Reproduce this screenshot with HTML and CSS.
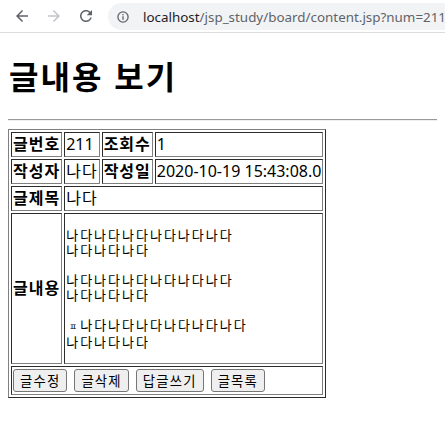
FILE: index.html
```html
<!DOCTYPE html>
<html lang="ko">
<head>
<meta charset="utf-8">
<title>글내용 보기</title>
<link rel="stylesheet" href="styles.css">
</head>
<body>
<div class="toolbar">
  <span class="nav back">
    <svg viewBox="0 0 24 24" width="18" height="18"><path d="M20 11H7.83l5.59-5.59L12 4l-8 8 8 8 1.41-1.41L7.83 13H20v-2z"/></svg>
  </span>
  <span class="nav fwd">
    <svg viewBox="0 0 24 24" width="18" height="18"><path d="M4 11h12.17l-5.59-5.59L12 4l8 8-8 8-1.41-1.41L16.17 13H4v-2z"/></svg>
  </span>
  <span class="nav reload">
    <svg viewBox="0 0 24 24" width="18" height="18"><path d="M17.65 6.35C16.2 4.9 14.21 4 12 4c-4.42 0-7.99 3.58-7.990 8s3.57 8 7.99 8c3.73 0 6.84-2.55 7.73-6h-2.08c-.82 2.33-3.04 4-5.65 4-3.31 0-6-2.69-6-6s2.69-6 6-6c1.66 0 3.14.69 4.22 1.78L13 11h7V4l-2.35 2.35z"/></svg>
  </span>
  <div class="omnibox">
    <svg class="info" viewBox="0 0 12 12" width="12" height="12"><circle cx="6" cy="6" r="5.1" fill="none" stroke="#5f6368" stroke-width="1.3"/><rect x="5.35" y="5.2" width="1.3" height="3.6" fill="#5f6368"/><rect x="5.35" y="3" width="1.3" height="1.3" fill="#5f6368"/></svg>
    <span class="url"><span class="host">localhost</span>/jsp_study/board/content.jsp?num=211</span>
  </div>
</div>
<div class="page">
  <h1>글내용 보기</h1>
  <hr class="rule">
  <table class="board">
    <tr><th>글번호</th><td>211</td><th>조회수</th><td>1</td></tr>
    <tr><th>작성자</th><td class="ko">나다</td><th>작성일</th><td>2020-10-19 15:43:08.0</td></tr>
    <tr><th>글제목</th><td colspan="3" class="ko">나다</td></tr>
    <tr><th>글내용</th><td colspan="3"><pre class="content">나다나다나다나다나다나다
나다나다나다

나다나다나다나다나다나다
나다나다나다

<span class="jamo">ㅍ</span>나다나다나다나다나다나다
나다나다나다</pre></td></tr>
    <tr><td colspan="4">
      <div class="actions">
        <button type="button" class="btn">글수정</button>
        <button type="button" class="btn">글삭제</button>
        <button type="button" class="btn">답글쓰기</button>
        <button type="button" class="btn">글목록</button>
      </div>
    </td></tr>
  </table>
</div>
</body>
</html>
```

FILE: styles.css
```css
html, body {
  margin: 0;
  padding: 0;
  background: #ffffff;
  overflow: hidden;
}
body {
  font-family: "Noto Sans", "Noto Sans CJK KR", sans-serif;
  font-size: 16px;
  color: #000;
}
.toolbar {
  display: flex;
  align-items: center;
  height: 32px;
  border-bottom: 1px solid #dadce0;
  padding-left: 13px;
  overflow: hidden;
  white-space: nowrap;
}
.nav {
  display: flex;
  align-items: center;
  justify-content: center;
  width: 18px;
  height: 18px;
  margin-right: 14px;
}
.nav svg { fill: #5f6368; }
.nav.fwd svg { fill: #c1c4c8; }
.nav.reload { margin-right: 13px; }
.omnibox {
  flex: none;
  display: flex;
  align-items: center;
  width: 420px;
  height: 27px;
  border-radius: 14px;
  background: #f1f3f4;
  padding-left: 9px;
  margin-top: 1px;
}
.info { flex: none; }
.url {
  margin-left: 14px;
  font-family: "Noto Sans", sans-serif;
  font-size: 13.4px;
  color: #5f6368;
}
.host { color: #202124; }
.page {
  padding: 0 8px 8px;
}
h1 {
  font-family: "Noto Sans CJK KR", sans-serif;
  font-size: 32px;
  font-weight: bold;
  line-height: 43px;
  letter-spacing: 2px;
  margin: 0 0 22px;
  padding: 21px 0 0 1px;
}
.rule {
  margin: 0 0 8px;
  border: 0;
  border-top: 1px solid #9a9a9a;
  border-bottom: 1px solid #eeeeee;
  height: 0;
}
.board {
  border: 1px outset #808080;
  border-spacing: 2px;
  border-collapse: separate;
}
.board th, .board td {
  border: 1px inset #808080;
  padding: 1px;
  line-height: 21px;
  white-space: nowrap;
}
.board th {
  font-weight: bold;
  text-align: left;
  letter-spacing: 1px;
}
.board td { text-align: left; }
.board td.ko { letter-spacing: 1px; }
.content {
  margin: 12px 0 13px;
  font-family: "Noto Sans Mono CJK KR", "Noto Sans CJK KR", monospace;
  font-size: 13px;
  line-height: 15px;
  letter-spacing: 2px;
}
.jamo {
  display: inline-block;
  width: 14px;
  font-size: 9px;
  text-align: center;
  letter-spacing: 0;
}
.actions {
  display: flex;
  gap: 7px;
  padding: 1px 0;
}
.btn {
  font-family: "Noto Sans CJK KR", sans-serif;
  font-size: 13.33px;
  line-height: 18px;
  height: 23px;
  padding: 1px 6px;
  letter-spacing: 1.2px;
  border: 1px solid #767676;
  border-radius: 3px;
  background: #efefef;
  color: #000;
}
```
